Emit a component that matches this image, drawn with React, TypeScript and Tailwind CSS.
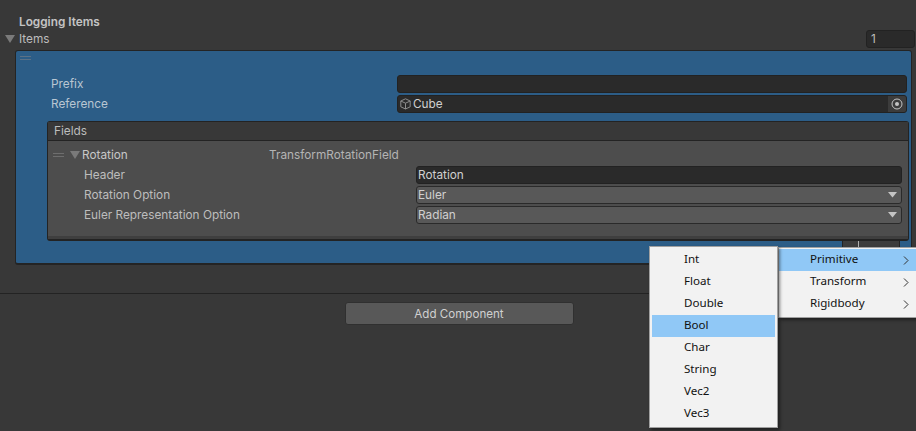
const inter = 'font-["Inter",sans-serif]';

function Triangle() {
  return (
    <svg width="10" height="8" viewBox="0 0 10 8" className="shrink-0">
      <path d="M0 0H10L5 8Z" fill="#7a7a7a" />
    </svg>
  );
}

function DragHandle({ color }: { color: string }) {
  return (
    <svg width="11" height="5" viewBox="0 0 11 5" className="shrink-0">
      <rect x="0" y="0" width="11" height="1" fill={color} />
      <rect x="0" y="3" width="11" height="1" fill={color} />
    </svg>
  );
}

function CubeIcon() {
  return (
    <svg width="11" height="12" viewBox="0 0 11 12" fill="none" stroke="#8c8c8c" strokeWidth="1" className="shrink-0">
      <path d="M5.5 .8 10.2 3v5.8L5.5 11 .8 8.8V3Z" />
      <path d="M.8 3 5.5 5.2 10.2 3M5.5 5.2V11" />
    </svg>
  );
}

function Dropdown({ label }: { label: string }) {
  return (
    <div className="flex h-[18px] flex-1 items-center justify-between rounded-[3px] border border-[#2a2a2a] bg-[#585858] pl-[1px] pr-[4px] text-[#d0d0d0]">
      <span>{label}</span>
      <svg width="9" height="6" viewBox="0 0 9 6">
        <path d="M0 0H9L4.5 5.5Z" fill="#c4c4c4" />
      </svg>
    </div>
  );
}

function FieldRow({ label, children }: { label: string; children: React.ReactNode }) {
  return (
    <div className="flex h-5 items-center pl-[36px] pr-[6px]">
      <span className="w-[332px] shrink-0 text-[#bdbdbd]">{label}</span>
      {children}
    </div>
  );
}

function MenuItem({ label, active, arrow, indent }: { label: string; active?: boolean; arrow?: boolean; indent: string }) {
  return (
    <div className={`flex h-[22px] items-center justify-between ${indent} ${active ? 'bg-[#90c8f6]' : ''}`}>
      <span className="pb-[2px]">{label}</span>
      {arrow && (
        <svg width="6" height="9" viewBox="0 0 6 9" fill="none" stroke="#333" strokeWidth="1" className="mr-[8px]">
          <path d="M1 .5 5 4.5 1 8.5" />
        </svg>
      )}
    </div>
  );
}

export default function App() {
  const primitives = ['Int', 'Float', 'Double', 'Bool', 'Char', 'String', 'Vec2', 'Vec3'];

  return (
    <div className={`relative h-[431px] w-[916px] overflow-hidden bg-[#383838] text-[11.8px] leading-[16px] text-[#bdbdbd] ${inter}`}>
      {/* Inspector section */}
      <div className="h-[294px] border-b border-[#232323]">
        <div className="pl-[19px] pt-[14px] font-semibold text-[#c4c4c4]">Logging Items</div>
        <div className="flex h-[18px] items-center pl-[5px] pr-px">
          <Triangle />
          <span className="ml-[4px] flex-1">Items</span>
          <div className="-mt-[1px] flex h-[18px] w-[49px] items-center rounded-[3px] border border-[#222] bg-[#2a2a2a] pl-[4px]">1</div>
        </div>

        {/* Selected list element */}
        <div className="ml-[15px] mr-[4px] mt-[2px] h-[215px] rounded-[3px] border border-[#242424] border-b-2 bg-[#2c5d87] pt-[5px]">
          <div className="pl-[4px]">
            <DragHandle color="#5b7186" />
          </div>
          <div className="mt-[13px] flex h-5 items-center pl-[35px] pr-[4px]">
            <span className="w-[346px] shrink-0 text-[#b9c6d2]">Prefix</span>
            <div className="h-[18px] flex-1 rounded-[3px] border border-[#222] bg-[#2a2a2a]" />
          </div>
          <div className="flex h-5 items-center pl-[35px] pr-[4px]">
            <span className="w-[346px] shrink-0 text-[#b9c6d2]">Reference</span>
            <div className="flex h-[18px] flex-1 items-center justify-between overflow-hidden rounded-[3px] border border-[#222] bg-[#2a2a2a] pl-[2px]">
              <div className="flex items-center gap-[2px] text-[#d0d0d0]">
                <CubeIcon />
                <span>Cube</span>
              </div>
              <div className="flex h-full w-[18px] items-center justify-center bg-[#3c3c3c]">
                <svg width="12" height="12" viewBox="0 0 12 12">
                  <circle cx="6" cy="6" r="5" fill="none" stroke="#c4c4c4" strokeWidth="1" />
                  <circle cx="6" cy="6" r="2" fill="#c4c4c4" />
                </svg>
              </div>
            </div>
          </div>

          {/* Fields list */}
          <div className="relative ml-[31px] mr-[2px] mt-[7px] h-[120px] rounded-[3px] border border-[#232323] border-b-2 bg-[#4d4d4d]">
            <div className="flex h-[19px] items-center border-b border-[#232323] bg-[#383838] pl-[6px]">Fields</div>
            <div className="box-content flex h-5 items-center pl-[5px] pt-[4px]">
              <DragHandle color="#6e6e6e" />
              <span className="ml-[6px]"><Triangle /></span>
              <span className="ml-[2px] w-[187px] text-[#c8c8c8]">Rotation</span>
              <span className="text-[#b4b4b4]">TransformRotationField</span>
            </div>
            <FieldRow label="Header">
              <div className="flex h-[18px] flex-1 items-center rounded-[3px] border border-[#222] bg-[#2a2a2a] pl-[1px] text-[#d0d0d0]">Rotation</div>
            </FieldRow>
            <FieldRow label="Rotation Option">
              <Dropdown label="Euler" />
            </FieldRow>
            <FieldRow label="Euler Representation Option">
              <Dropdown label="Radian" />
            </FieldRow>
            <div className="absolute inset-x-0 bottom-0 h-[3px] bg-[#3f3f3f]" />
          </div>

          {/* Add / remove footer, mostly hidden by the menu */}
          <div className="ml-auto mr-[11px] flex h-[8px] w-[58px] border-x border-[#232323] bg-[#3c3c3c] pl-[15px]">
            <div className="h-[6px] w-px bg-[#b0b0b0]" />
          </div>
        </div>
      </div>

      <div className="flex justify-center pt-[8px]">
        <button className="ml-[2px] h-[23px] w-[229px] rounded-[3px] border border-[#303030] bg-[#585858] text-[11.6px] text-[#d0d0d0]">Add Component</button>
      </div>

      {/* Context menus */}
      <div className={`absolute left-[778px] top-[247px] w-[150px] border border-[#a0a0a0] bg-[#f2f2f2] pb-[2px] pt-px text-[11.6px] text-[#111] shadow-[2px_2px_3px_rgba(0,0,0,0.45)] font-["Noto_Sans","Noto_Sans_CJK_KR",sans-serif]`}>
        <div className="w-[138px]">
          <MenuItem label="Primitive" active arrow indent="pl-[31px]" />
          <MenuItem label="Transform" arrow indent="pl-[31px]" />
          <MenuItem label="Rigidbody" arrow indent="pl-[31px]" />
        </div>
      </div>
      <div className={`absolute left-[649px] top-[246px] w-[129px] border border-[#a0a0a0] bg-[#f2f2f2] p-[2px] text-[11.6px] text-[#111] shadow-[2px_2px_3px_rgba(0,0,0,0.45)] font-["Noto_Sans","Noto_Sans_CJK_KR",sans-serif]`}>
        {primitives.map((name) => (
          <MenuItem key={name} label={name} active={name === 'Bool'} indent="pl-[32px]" />
        ))}
      </div>
    </div>
  );
}
